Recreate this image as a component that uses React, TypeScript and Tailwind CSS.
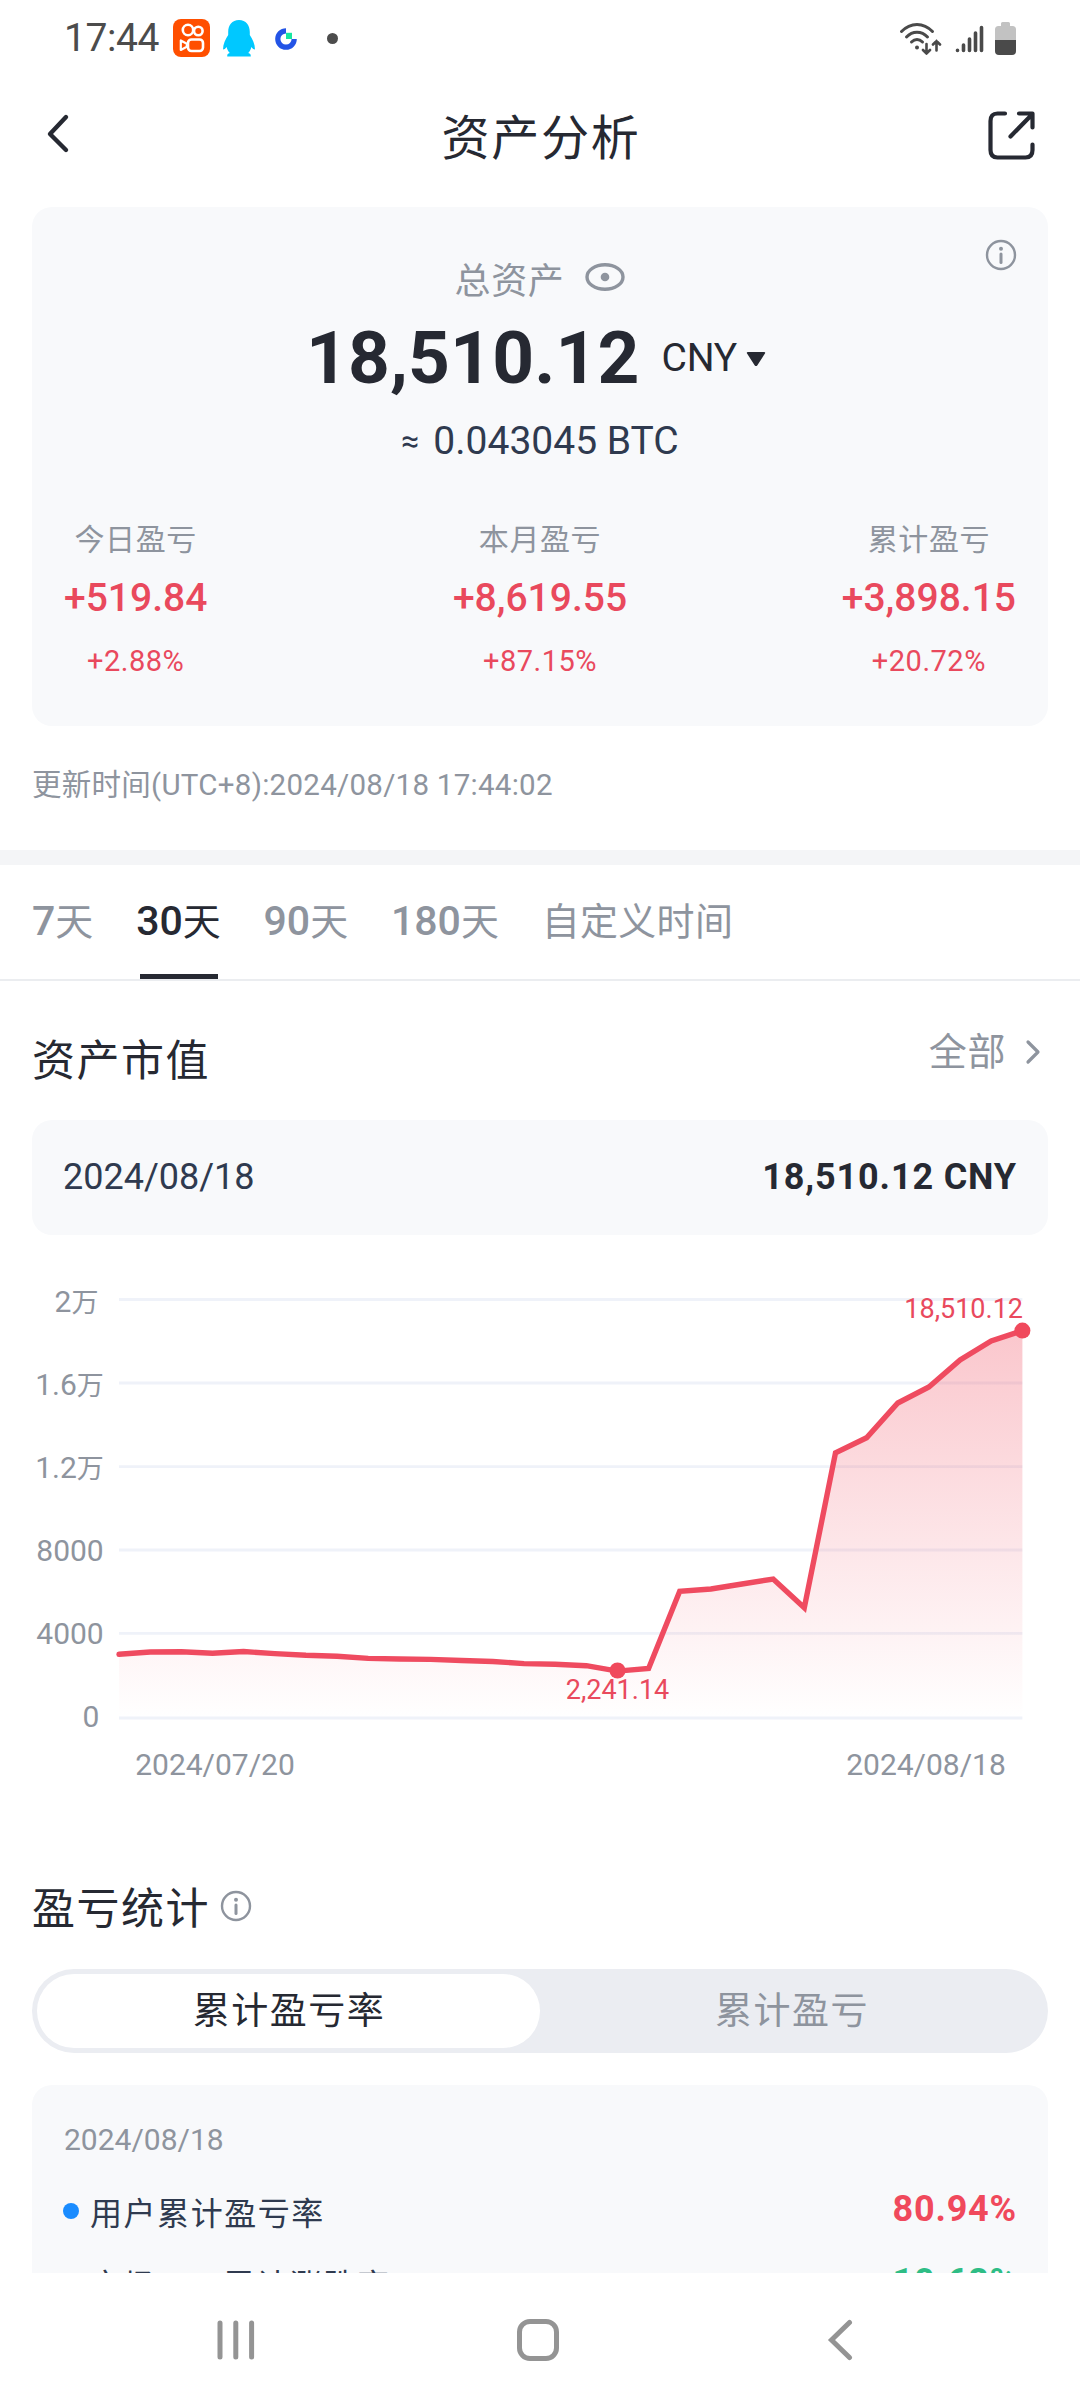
const dailyValues = [
  3043, 3153, 3168, 3091, 3177, 3077, 2996, 2948, 2848, 2819, 2800, 2747, 2700,
  2599, 2566, 2499, 2241.14, 2365, 6054, 6164, 6402, 6641, 5265, 12671, 13393,
  15051, 15815, 17105, 18013, 18510.12,
];

const yTicks = [
  { label: "2万", y: 51.5, x: 76.5 },
  { label: "1.6万", y: 135, x: 69.5 },
  { label: "1.2万", y: 218, x: 69.5 },
  { label: "8000", y: 301, x: 70 },
  { label: "4000", y: 384, x: 70 },
  { label: "0", y: 467, x: 91 },
];

const profits = [
  { label: "今日盈亏", amount: "+519.84", percent: "+2.88%", align: "justify-self-start" },
  { label: "本月盈亏", amount: "+8,619.55", percent: "+87.15%", align: "justify-self-center" },
  { label: "累计盈亏", amount: "+3,898.15", percent: "+20.72%", align: "justify-self-end" },
];

const ranges = [
  { num: "7", text: "天" },
  { num: "30", text: "天", active: true },
  { num: "90", text: "天" },
  { num: "180", text: "天" },
  { num: "", text: "自定义时间" },
];

function InfoIcon() {
  return (
    <svg width="32" height="32" viewBox="0 0 32 32" fill="none" className="shrink-0">
      <circle cx="16" cy="16" r="14" stroke="#8e949e" strokeWidth="2.4" />
      <circle cx="16" cy="9.8" r="2" fill="#8e949e" />
      <path d="M16 15v8.5" stroke="#8e949e" strokeWidth="3" strokeLinecap="round" />
    </svg>
  );
}

function StatusBar() {
  return (
    <div className="flex h-[76px] items-center pl-[64px] pr-[63px]">
      <span className="w-[109px] text-[39px] leading-none tracking-[-0.4px] text-[#4c4c4c]">
        17:44
      </span>
      <svg width="37" height="38" viewBox="0 0 37 38" fill="none">
        <rect width="37" height="38" rx="8" fill="#ff4f00" />
        <g stroke="#fff" strokeWidth="2.6">
          <circle cx="15" cy="11" r="5.2" />
          <circle cx="25.3" cy="12" r="4.3" />
          <rect x="15" y="20.5" width="15" height="11.5" rx="3.5" />
          <path d="M7.8 21.5v9.5l6-3.300v-2.900z" strokeWidth="2.2" strokeLinejoin="round" />
        </g>
      </svg>
      <svg width="32" height="37" viewBox="0 0 32 37" className="ml-[13px]">
        <path
          d="M16 0C9 0 5.200 5 5.200 12v3C2.500 19 0 24 0 29.500c1.200 0 2.500-.800 3.600-2.500.600 2.400 1.600 4.200 3.200 6-2 .500-2.600 1.200-2.600 3.500h23.600c0-2.300-.600-3-2.600-3.500 1.600-1.800 2.600-3.600 3.200-6 1.100 1.700 2.400 2.500 3.600 2.500C32 24 29.500 19 26.800 15v-3C26.800 5 23 0 16 0z"
          fill="#00c8ff"
        />
      </svg>
      <svg width="22" height="22" viewBox="0 0 22 22" fill="none" className="ml-[20px] mt-[2px]">
        <path d="M11 2.800a8.200 8.200 0 1 0 8.200 8.200" stroke="#2354e6" strokeWidth="5.200" />
        <rect x="11" y="4.800" width="6" height="6.200" fill="#17e6a1" />
      </svg>
      <span className="ml-[30px] size-[11px] rounded-full bg-[#4c4c4c]" />

      <div className="ml-auto flex items-center">
        <svg width="43" height="34" viewBox="0 0 43 34" fill="none" stroke="#4a4a4a" strokeLinecap="round">
          <path d="M2.500 10.500c9-9.500 22-9.500 31 0M7.500 16c6-6.500 15-6.500 21 0M12.500 21c3.500-3.500 7.500-3.500 11 0" strokeWidth="3" />
          <circle cx="18" cy="26.500" r="2" fill="#4a4a4a" stroke="none" />
          <path d="M27.500 23v9.500m-3.500-3.500 3.500 3.500 3.500-3.500M37.500 29.500v-9.500m-3.500 3.500 3.500-3.500 3.500 3.500" strokeWidth="2.600" />
        </svg>
        <svg width="29" height="30" viewBox="0 0 29 30" stroke="#4a4a4a" strokeWidth="3.600" strokeLinecap="round" className="ml-[13px]">
          <path d="M2.500 27.300v.200M8.500 22v5.500M14.500 16v11.500M20.500 10v17.500M26.500 4.500v23" />
        </svg>
        <svg width="22" height="34" viewBox="0 0 22 34" className="ml-[11px]">
          <path d="M6 2.500Q6 1 7.500 1h6Q15 1 15 2.500V5h2.500Q21 5 21 8.500V20H0V8.500Q0 5 3.500 5H6z" fill="#c2c2c2" />
          <path d="M0 19h21v11q0 4-4 4H4q-4 0-4-4z" fill="#4a4a4a" />
        </svg>
      </div>
    </div>
  );
}

function Header() {
  return (
    <header className="flex h-[131px] items-start justify-between pl-[44px] pr-[43px] text-[#262932]">
      <svg width="28" height="42" viewBox="0 0 28 42" fill="none" className="mt-[37px]">
        <path d="M22 4 6 21l16 16" stroke="#262932" strokeWidth="4.400" strokeLinecap="round" strokeLinejoin="round" />
      </svg>
      <h1 className="ml-[24px] mt-[28px] text-[48px] leading-[70px] tracking-[1.700px]">资产分析</h1>
      <svg width="51" height="52" viewBox="0 0 51 52" fill="none" stroke="#262932" strokeWidth="4.200" strokeLinecap="round" strokeLinejoin="round" className="mt-[33px]">
        <path d="M19 4.500h-7.500Q4.500 4.500 4.500 12v29q0 7.500 7 7.500h28q7 0 7-7.500v-5.500" />
        <path d="M33 4.500h13.500v14M46 5.500 24.500 27.500" />
      </svg>
    </header>
  );
}

function TotalCard() {
  return (
    <section className="relative mx-[32px] h-[519px] rounded-[20px] bg-[#f8f9fb] pt-[49px]">
      <div className="absolute right-[31px] top-[32px]">
        <InfoIcon />
      </div>
      <div className="flex h-[52px] items-center justify-center text-[36px] leading-[52px] tracking-[0.600px] text-[#8e949e]">
        总资产
        <svg width="40" height="30" viewBox="0 0 40 30" fill="none" className="mb-[11px] ml-[21px]">
          <ellipse cx="20" cy="15" rx="18" ry="12.300" stroke="#8e949e" strokeWidth="3.400" />
          <circle cx="20" cy="15" r="4.300" fill="#8e949e" />
        </svg>
      </div>
      <div className="mt-[5px] flex h-[92px] items-center justify-center pr-[8px] text-[#262932]">
        <span className="text-[73px] font-bold tracking-[0.150px]">18,510.12</span>
        <span className="mb-px ml-[22px] text-[39px] tracking-[-0.200px]">CNY</span>
        <svg width="20" height="16" viewBox="0 0 20 16" className="ml-[9px]">
          <path d="M2 1h16q2 0 .800 1.800l-7.400 11.400q-1.400 1.800-2.800 0L1.200 2.800Q0 1 2 1z" fill="#262932" />
        </svg>
      </div>
      <div className="mt-[6px] flex h-[60px] items-center justify-center text-[39px] text-[#2f3a4f]">
        <span className="mr-[14px] text-[32px]">≈</span>
        0.043045 BTC
      </div>
      <div className="mt-[47px] grid grid-cols-[1fr_auto_1fr] px-[32px]">
        {profits.map((item) => (
          <div key={item.label} className={`flex flex-col items-center text-[#e9495d] ${item.align}`}>
            <span className="text-[30px] leading-[44px] tracking-[0.600px] text-[#8e949e]">{item.label}</span>
            <span className="mt-[11px] text-[39px] font-medium leading-[50px]">{item.amount}</span>
            <span className="mt-[20px] text-[29px] leading-[36px] tracking-[0.500px]">{item.percent}</span>
          </div>
        ))}
      </div>
    </section>
  );
}

function RangeTabs() {
  return (
    <nav className="flex h-[116px] items-start gap-[42.5px] border-b-2 border-[#ebedf0] pl-[32px] text-[#8e949e]">
      {ranges.map((range) => (
        <div
          key={range.num + range.text}
          className={`flex h-[114px] flex-col items-center justify-between ${range.active ? "text-[#262932]" : ""}`}
        >
          <div className="pt-[26px] text-[41px] leading-[60px]">
            <span className="font-medium">{range.num}</span>
            <span className="text-[38px] tracking-[0.300px]">{range.text}</span>
          </div>
          {range.active && <span className="h-[5px] w-[78px] bg-[#262932]" />}
        </div>
      ))}
    </nav>
  );
}

function ValueChart() {
  // plot area: x 119..1022, 0 at y 458, 20000 at y 39.4
  const points = dailyValues.map((value, i) => {
    const x = 119 + (i * 903.4) / 29;
    const y = 458 - (value / 20000) * 418.6;
    return `${x.toFixed(1)},${y.toFixed(1)}`;
  });

  return (
    <svg width="1080" height="559" viewBox="0 0 1080 559" fill="none" className="block">
      <defs>
        <linearGradient id="area" x1="0" y1="70" x2="0" y2="458" gradientUnits="userSpaceOnUse">
          <stop offset="0" stopColor="#f0495c" stopOpacity="0.31" />
          <stop offset="1" stopColor="#f0495c" stopOpacity="0" />
        </linearGradient>
      </defs>
      {[39.5, 123, 206.6, 290, 373.3, 458].map((y) => (
        <path key={y} d={`M119 ${y}H1022.400`} stroke="#eff2f9" strokeWidth="2.800" />
      ))}
      <polygon points={`119,458 ${points.join(" ")} 1022.4,458`} fill="url(#area)" />
      <polyline points={points.join(" ")} stroke="#ef4b60" strokeWidth="5.400" strokeLinecap="round" />
      <circle cx="617.500" cy="410.500" r="8" fill="#f0495c" />
      <circle cx="1022.400" cy="70.600" r="8" fill="#f0495c" />
      <g fill="#8e949e" fontSize="30" textAnchor="middle">
        {yTicks.map((tick) => (
          <text key={tick.label} x={tick.x} y={tick.y}>
            {tick.label.replace("万", "")}
            {tick.label.endsWith("万") && <tspan fontSize="27">万</tspan>}
          </text>
        ))}
        <text x="215" y="515">2024/07/20</text>
        <text x="926" y="515">2024/08/18</text>
      </g>
      <g fill="#e9495d" fontSize="27">
        <text x="617.500" y="438.700" textAnchor="middle">2,241.14</text>
        <text x="1023" y="58" textAnchor="end">18,510.12</text>
      </g>
    </svg>
  );
}

function MarketValue() {
  return (
    <section>
      <div className="flex h-[139px] items-start justify-between pl-[32px] pr-[37px]">
        <h2 className="mt-[48px] text-[43px] leading-[64px] tracking-[1.500px] text-[#262932]">资产市值</h2>
        <div className="mt-[43px] flex items-center text-[38px] leading-[56px] tracking-[0.600px] text-[#8e949e]">
          全部
          <svg width="20" height="26" viewBox="0 0 20 26" fill="none" className="ml-[17px]">
            <path d="m5 3 10 10L5 23" stroke="#8e949e" strokeWidth="3.200" strokeLinecap="round" strokeLinejoin="round" />
          </svg>
        </div>
      </div>
      <div className="mx-[32px] flex h-[115px] items-center justify-between rounded-[20px] bg-[#f8f9fb] px-[31px] pb-[2px] text-[36px]">
        <span className="text-[#2f3a4f]">2024/08/18</span>
        <span className="font-bold tracking-[0.850px] text-[#262932]">18,510.12 CNY</span>
      </div>
      <div className="mt-[25px]">
        <ValueChart />
      </div>
    </section>
  );
}

function ProfitStats() {
  return (
    <section className="h-[454px] overflow-hidden">
      <div className="flex h-[150px] items-start pl-[32px] pt-[58px]">
        <h2 className="text-[43px] leading-[64px] tracking-[1.500px] text-[#262932]">盈亏统计</h2>
        <div className="ml-[10px] mt-[13px]">
          <InfoIcon />
        </div>
      </div>
      <div className="mx-[32px] flex h-[84px] rounded-full bg-[#ebedf2] p-[5px] text-[37px] leading-[74px] tracking-[1.500px]">
        <button type="button" className="w-[503px] rounded-full bg-white pl-px pt-px text-[#262932]">
          累计盈亏率
        </button>
        <button type="button" className="flex-1 pl-px pt-px text-[#8e949e]">
          累计盈亏
        </button>
      </div>
      <div className="mx-[32px] mt-[32px] rounded-t-[20px] bg-[#f8f9fb] px-[31px] pt-[32px]">
        <div className="pl-px text-[30px] leading-[46px] text-[#8e949e]">2024/08/18</div>
        <div className="mt-[10px] flex h-[75px] items-center">
          <span className="mr-[11px] size-[16px] rounded-full bg-[#1a8cff]" />
          <span className="mt-[6px] text-[32px] tracking-[1.550px] text-[#2f3a4f]">用户累计盈亏率</span>
          <span className="mb-[4px] ml-auto text-[36px] font-bold tracking-[0.800px] text-[#f0495c]">80.94%</span>
        </div>
        <div className="-mt-[2px] flex h-[75px] items-center">
          <span className="mr-[11px] size-[16px] rounded-full bg-[#ffb31a]" />
          <span className="mt-[4px] text-[32px] tracking-[1.550px] text-[#2f3a4f]">
            市场<span className="tracking-[2.200px]">BTC</span>累计涨跌率
          </span>
          <span className="mb-[4px] ml-auto text-[36px] font-bold tracking-[0.800px] text-[#2ebd85]">10.68%</span>
        </div>
      </div>
    </section>
  );
}

function NavBar() {
  return (
    <footer className="flex h-[127px] items-center bg-white pl-[215px] pt-[6px]">
      <svg width="42" height="42" viewBox="0 0 42 42" stroke="#949494" strokeWidth="5" strokeLinecap="round">
        <path d="M5 4v34M20.800 4v34M36.600 4v34" />
      </svg>
      <span className="ml-[260px] size-[42px] rounded-[13px] border-[5px] border-[#949494]" />
      <svg width="28" height="42" viewBox="0 0 28 42" fill="none" className="ml-[268px]">
        <path d="M22.500 3.500 4.500 21l18 17.500" stroke="#949494" strokeWidth="5" strokeLinecap="round" />
      </svg>
    </footer>
  );
}

export default function App() {
  return (
    <div className="flex h-[2400px] w-[1080px] flex-col overflow-hidden bg-white font-['Roboto','Noto_Sans_CJK_SC',sans-serif]">
      <StatusBar />
      <Header />
      <TotalCard />
      <p className="mx-[32px] mt-[37px] h-[87px] text-[29.500px] leading-[44px] tracking-[0.270px] text-[#8e949e]">
        更新时间(UTC+8):2024/08/18 17:44:02
      </p>
      <div className="h-[15px] bg-[#f4f5f7]" />
      <RangeTabs />
      <MarketValue />
      <ProfitStats />
      <NavBar />
    </div>
  );
}
